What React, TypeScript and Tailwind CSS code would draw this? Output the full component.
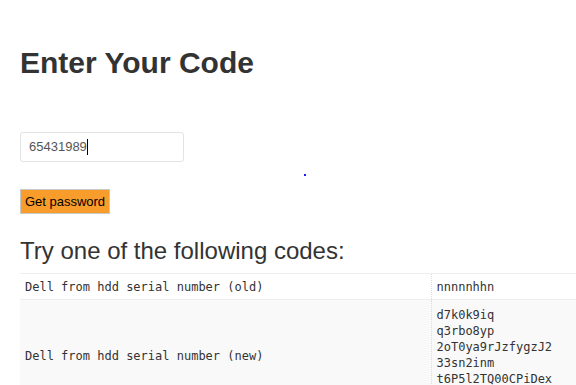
import React from 'react'

const codes = ['d7k0k9iq', 'q3rbo8yp', '2oT0ya9rJzfygzJ2', '33sn2inm', 't6P5l2TQ00CPiDex', '5f1e4a1dcI3Pw9U8']

export default function App() {
  return (
    <div className="w-[576px] h-[385px] overflow-hidden bg-white text-[#333] font-['Liberation_Sans',Arial,sans-serif]">
      <div className="pl-5 pt-[46px]">
        <h1 className="text-[30px] font-bold leading-[33px] text-[#333]">Enter Your Code</h1>
        <div className="mt-[53px] w-[164px] h-[30px] border border-[#e3e3e3] rounded-[3px] flex items-center pl-2 text-[13px] text-[#555]">
          65431989<span className="inline-block w-px h-[16px] bg-black" />
        </div>
        <div className="relative h-[27px]">
          <div className="absolute left-[284px] top-[12px] w-[2px] h-[2px] bg-[#1a1aff]" />
        </div>
        <button className="block h-[25px] w-[90px] bg-[#f89c2b] border border-[#c8c8c8] text-[13px] text-black leading-none">
          Get password
        </button>
        <h2 className="mt-[23px] text-[24px] leading-[28px] font-normal text-[#333]">Try one of the following codes:</h2>
        <table className="mt-[8px] w-[640px] border-collapse font-['DejaVu_Sans_Mono',monospace] text-[12px] text-[#333]">
          <tbody>
            <tr className="bg-white border-t border-[#eee]">
              <td className="w-[411px] h-[26px] px-[5px] py-0 align-middle">Dell from hdd serial number (old)</td>
              <td className="px-[5px] border-l border-dotted border-[#ddd] align-middle">nnnnnhhn</td>
            </tr>
            <tr className="bg-[#f9f9f9] border-t border-[#eee]">
              <td className="px-[5px] align-middle">Dell from hdd serial number (new)</td>
              <td className="px-[5px] pt-[7px] pb-[9px] border-l border-dotted border-[#ddd] leading-[16px]">
                {codes.map((c) => (
                  <div key={c}>{c}</div>
                ))}
              </td>
            </tr>
          </tbody>
        </table>
      </div>
    </div>
  )
}
